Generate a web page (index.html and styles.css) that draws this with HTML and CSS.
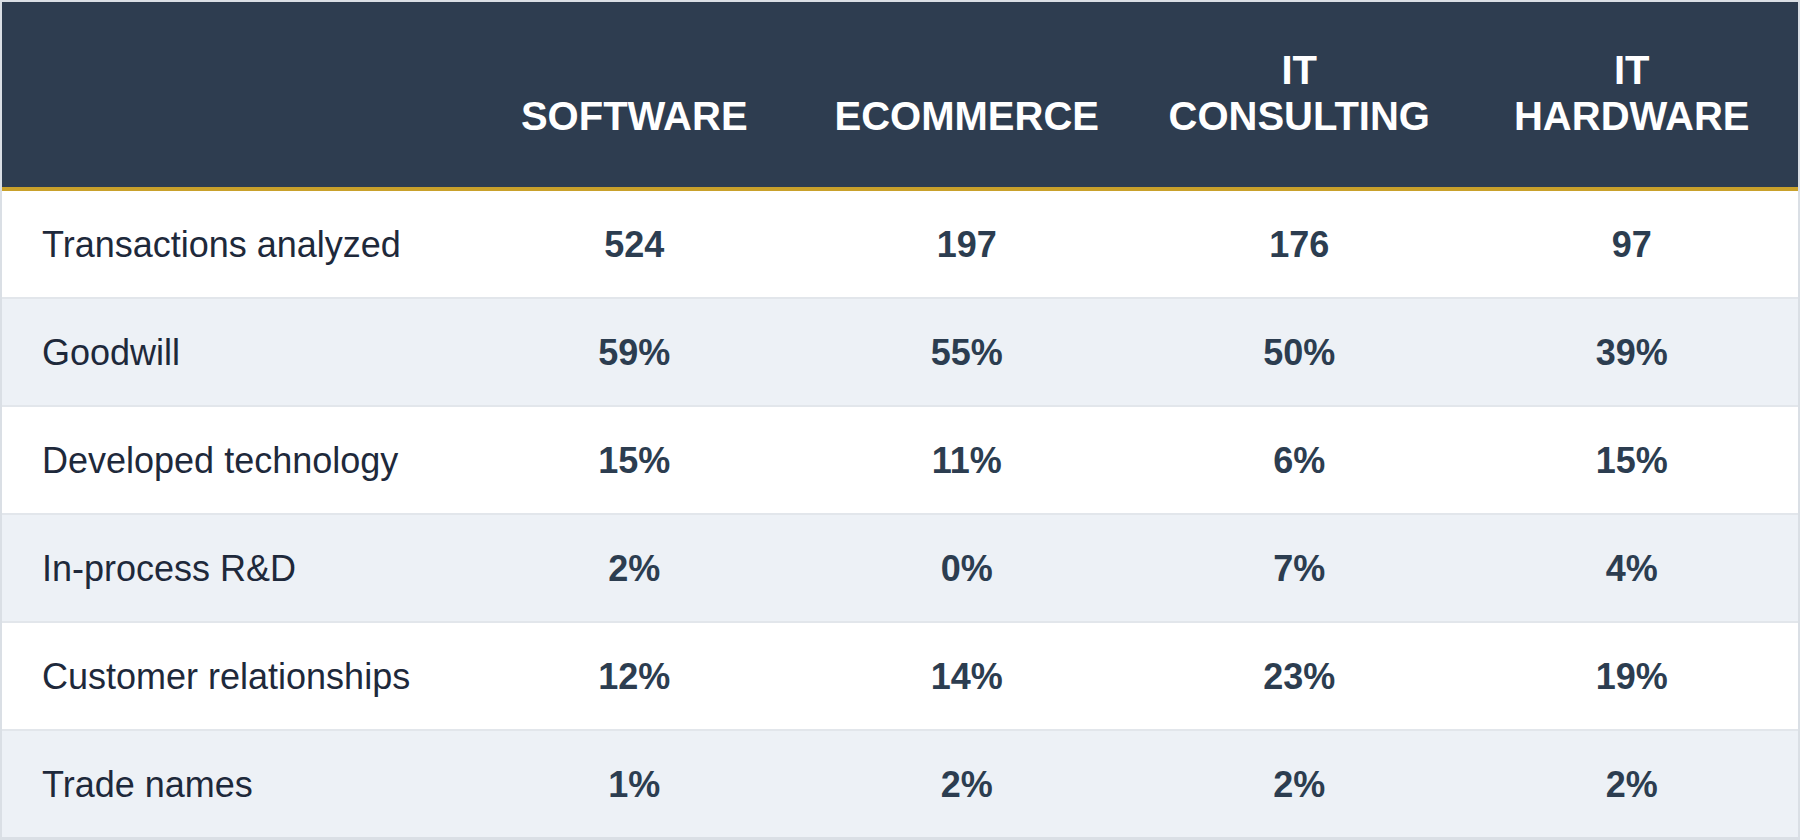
FILE: index.html
```html
<!DOCTYPE html>
<html lang="en">
<head>
<meta charset="utf-8">
<title>Purchase price allocation by industry</title>
<link rel="stylesheet" href="styles.css">
</head>
<body>
<div class="frame">
<table class="ppa">
  <colgroup>
    <col class="col-label">
    <col class="col-val">
    <col class="col-val">
    <col class="col-val">
    <col class="col-val">
  </colgroup>
  <thead>
    <tr>
      <th class="corner"></th>
      <th>SOFTWARE</th>
      <th>ECOMMERCE</th>
      <th>IT<br>CONSULTING</th>
      <th>IT<br>HARDWARE</th>
    </tr>
  </thead>
  <tbody>
    <tr><td class="label">Transactions analyzed</td><td>524</td><td>197</td><td>176</td><td>97</td></tr>
    <tr><td class="label">Goodwill</td><td>59%</td><td>55%</td><td>50%</td><td>39%</td></tr>
    <tr><td class="label">Developed technology</td><td>15%</td><td>11%</td><td>6%</td><td>15%</td></tr>
    <tr><td class="label">In-process R&amp;D</td><td>2%</td><td>0%</td><td>7%</td><td>4%</td></tr>
    <tr><td class="label">Customer relationships</td><td>12%</td><td>14%</td><td>23%</td><td>19%</td></tr>
    <tr><td class="label">Trade names</td><td>1%</td><td>2%</td><td>2%</td><td>2%</td></tr>
  </tbody>
</table>
</div>
</body>
</html>
```
FILE: styles.css
```css
html, body {
  margin: 0;
  padding: 0;
  background: #dadfe5;
}
body {
  font-family: "Liberation Sans", Arial, sans-serif;
}
.frame {
  padding: 2px;
  width: 1796px;
  height: 836px;
}
.ppa {
  width: 1796px;
  border-collapse: collapse;
  table-layout: fixed;
}
.col-label { width: 466px; }
.ppa thead th {
  background: #2e3d50;
  color: #ffffff;
  font-size: 40px;
  font-weight: bold;
  line-height: 46px;
  height: 187px;
  padding: 0 0 48px 0;
  box-sizing: border-box;
  vertical-align: bottom;
  text-align: center;
  border-bottom: 4px solid #c9a12b;
}
.ppa tbody td {
  height: 106px;
  padding: 0;
  font-size: 36px;
  line-height: 41px;
  font-weight: bold;
  color: #2c3d50;
  text-align: center;
  vertical-align: middle;
  background: #ffffff;
  border-bottom: 2px solid #e2e6eb;
}
.ppa tbody tr:nth-child(even) td { background: #edf1f6; }
.ppa tbody tr:last-child td { border-bottom: none; }
.ppa tbody td.label {
  text-align: left;
  font-weight: normal;
  color: #1e293b;
  padding-left: 40px;
}
```
